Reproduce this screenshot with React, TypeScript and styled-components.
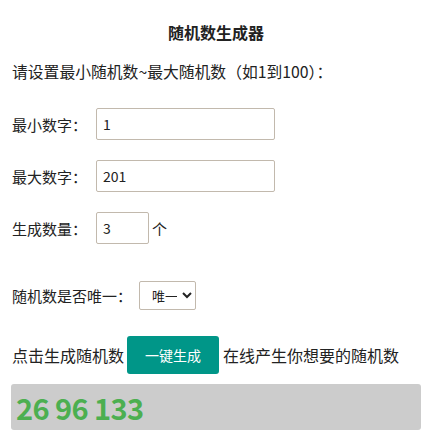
import React, { useState } from 'react';
import styled, { createGlobalStyle } from 'styled-components';

const GlobalStyle = createGlobalStyle`
  body {
    margin: 0;
    background: #fff;
    font-family: "Noto Sans CJK SC", "Noto Sans", sans-serif;
    color: #222;
  }
`;

const Page = styled.div`
  padding: 20px 8px 17px 11px;
  width: 410px;
`;

const Title = styled.div`
  text-align: center;
  font-size: 16px;
  font-weight: bold;
  line-height: 24px;
`;

const Intro = styled.div`
  margin-top: 16px;
  padding-left: 1px;
  font-size: 15.8px;
  line-height: 24px;
`;

const Row = styled.div<{ $top: number; $h?: number }>`
  display: flex;
  align-items: center;
  margin-top: ${p => p.$top}px;
  height: ${p => p.$h ?? 32}px;
  padding-left: 1px;
  font-size: 15px;
`;

const Label = styled.span<{ $w?: number }>`
  width: ${p => p.$w ?? 84}px;
  flex-shrink: 0;
`;

const NumInput = styled.input<{ $w: number }>`
  box-sizing: border-box;
  width: ${p => p.$w}px;
  height: 32px;
  border: 1px solid #c2b9ad;
  border-radius: 2px;
  padding: 0 6px;
  font-family: "Noto Sans CJK SC", "Noto Sans", sans-serif;
  font-size: 14px;
  color: #222;
  outline: none;
`;

const Unit = styled.span`
  margin-left: 3px;
`;

const Select = styled.select`
  box-sizing: border-box;
  width: 57px;
  height: 29px;
  border: 1px solid #c2b9ad;
  border-radius: 2px;
  padding: 0 2px 0 8px;
  background: #fff;
  font-family: "Noto Sans CJK SC", sans-serif;
  font-size: 13px;
  color: #222;
`;

const ActionRow = styled.div`
  display: flex;
  align-items: center;
  gap: 4px;
  margin-top: 26px;
  padding-left: 1px;
  font-size: 16px;
`;

const GenButton = styled.button`
  width: 92px;
  height: 38px;
  margin-left: -1px;
  border: none;
  border-radius: 3px;
  background: #009688;
  color: #fff;
  font-family: "Noto Sans CJK SC", sans-serif;
  font-size: 14px;
  cursor: pointer;
`;

const Result = styled.div`
  margin-top: 10px;
  height: 46px;
  border-radius: 3px;
  background: #cccccc;
  padding-left: 5px;
  display: flex;
  align-items: center;
  color: #4caf50;
  font-size: 29px;
  font-weight: bold;
  letter-spacing: -0.6px;
`;

function pick(min: number, max: number, count: number, unique: boolean) {
  const out: number[] = [];
  while (out.length < count) {
    const n = Math.floor(Math.random() * (max - min + 1)) + min;
    if (unique && out.includes(n)) continue;
    out.push(n);
  }
  return out.sort((a, b) => a - b);
}

export default function App() {
  const [min, setMin] = useState('1');
  const [max, setMax] = useState('201');
  const [count, setCount] = useState('3');
  const [unique, setUnique] = useState('1');
  const [result, setResult] = useState([26, 96, 133]);

  const generate = () => {
    const lo = parseInt(min, 10) || 0;
    const hi = parseInt(max, 10) || 0;
    const c = parseInt(count, 10) || 1;
    setResult(pick(lo, hi, c, unique === '1'));
  };

  return (
    <Page>
      <GlobalStyle />
      <Title>随机数生成器</Title>
      <Intro>请设置最小随机数~最大随机数（如1到100）：</Intro>

      <Row $top={24}>
        <Label>最小数字：</Label>
        <NumInput $w={179} value={min} onChange={e => setMin(e.target.value)} />
      </Row>
      <Row $top={20}>
        <Label>最大数字：</Label>
        <NumInput $w={179} value={max} onChange={e => setMax(e.target.value)} />
      </Row>
      <Row $top={20}>
        <Label>生成数量：</Label>
        <NumInput $w={53} value={count} onChange={e => setCount(e.target.value)} />
        <Unit>个</Unit>
      </Row>

      <Row $top={37} $h={29}>
        <Label $w={127}>随机数是否唯一：</Label>
        <Select value={unique} onChange={e => setUnique(e.target.value)}>
          <option value="1">唯一</option>
          <option value="0">可重复</option>
        </Select>
      </Row>

      <ActionRow>
        <span>点击生成随机数</span>
        <GenButton onClick={generate}>一键生成</GenButton>
        <span>在线产生你想要的随机数</span>
      </ActionRow>

      <Result>{result.join(' ')}</Result>
    </Page>
  );
}
